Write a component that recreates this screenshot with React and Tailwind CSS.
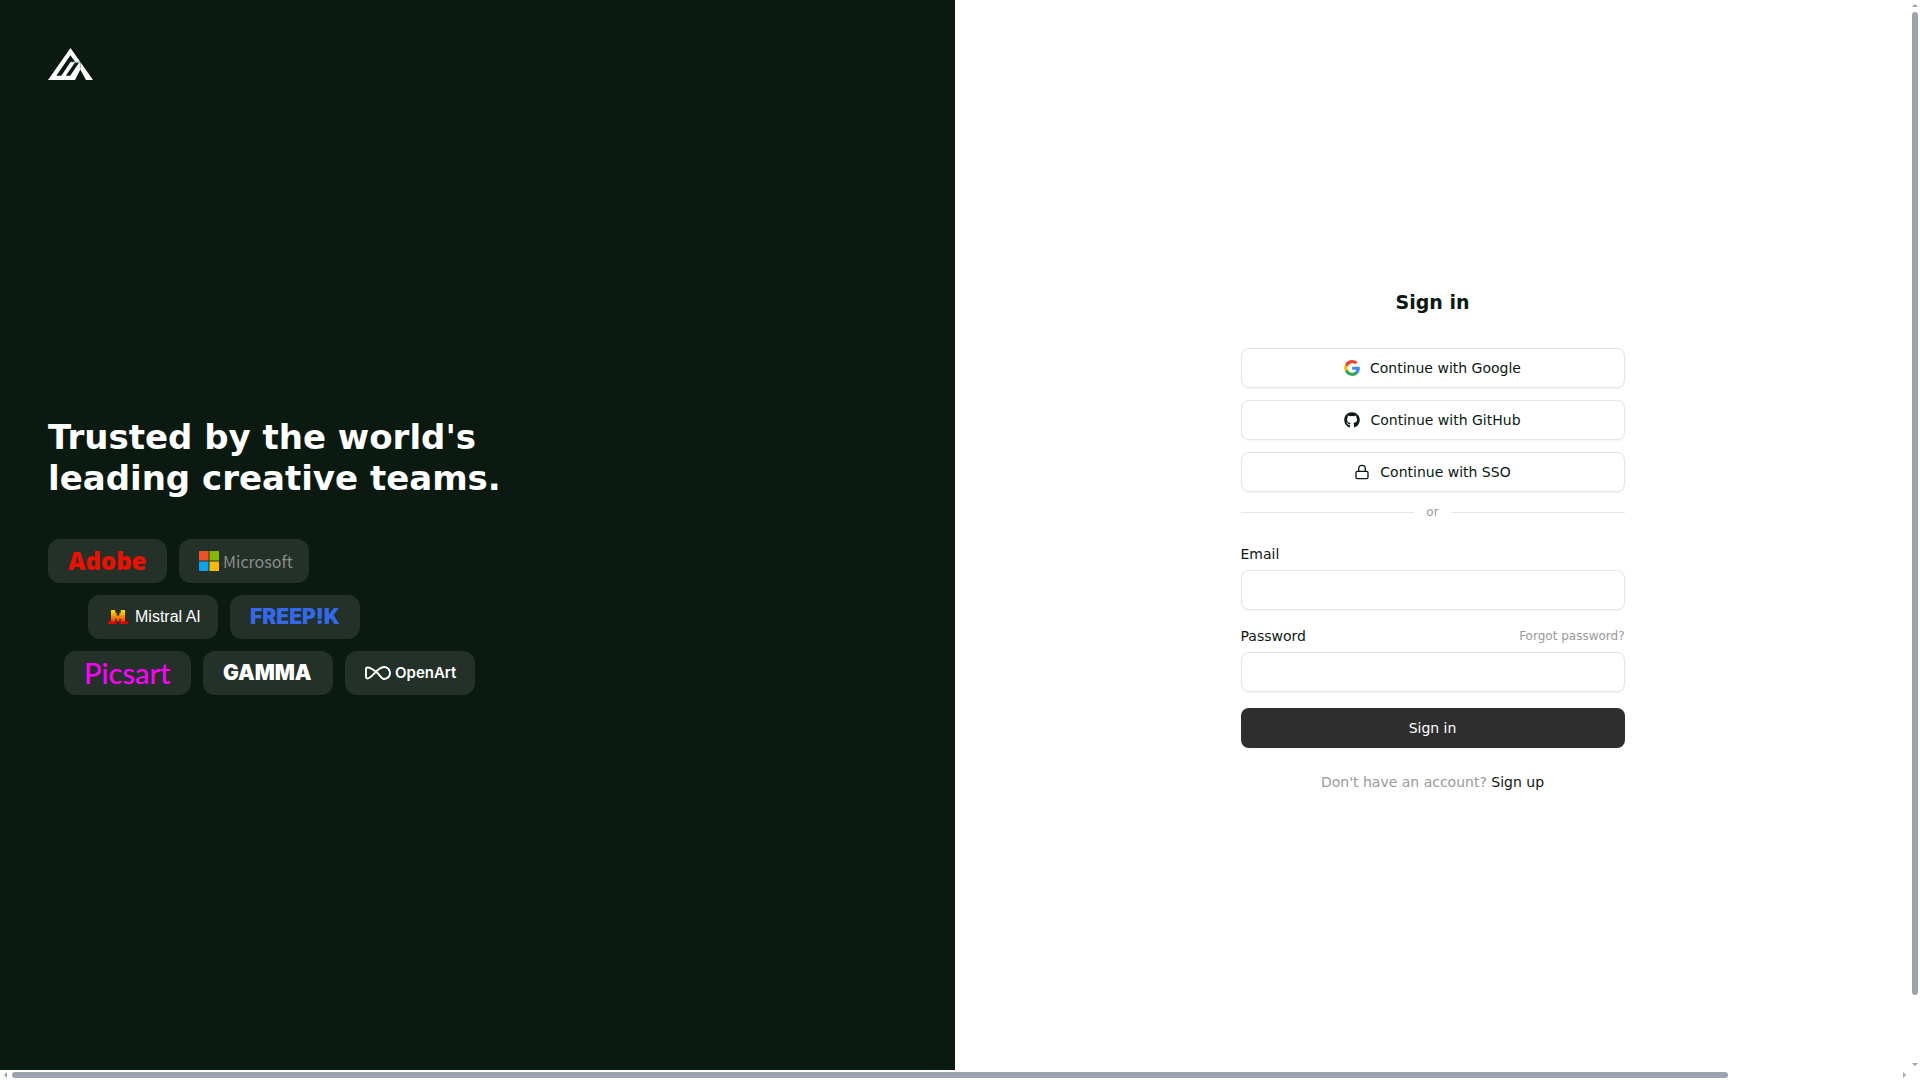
import { FaGithub } from 'react-icons/fa';
import { Lock } from 'lucide-react';

function BrandMark() {
    return (
        <svg className="h-8 w-[45px] shrink-0" viewBox="0 0 45 32" role="img" aria-label="Home">
            <path fill="#fff" d="M22.5 0 45 32H38L32.3 21.5 27 32H0Z" />
            <path fill="#0a1a10" d="M22.4 7.3 27 13.7H22.7L13.3 27.7H8.3Z" />
            <path fill="#0a1a10" d="M26.8 14.7H31L22.2 27.7H17.8Z" />
            <path fill="none" stroke="#0a1a10" strokeOpacity=".6" strokeWidth=".7" d="M23 14H32.3V20.5" />
        </svg>
    );
}

function GoogleIcon() {
    return (
        <svg className="size-4" viewBox="0 0 24 24" aria-hidden="true">
            <path fill="#4285F4" d="M23.745 12.27c0-.79-.07-1.54-.19-2.27h-11.3v4.51h6.47c-.29 1.48-1.14 2.73-2.4 3.58v3h3.86c2.26-2.09 3.56-5.17 3.56-8.82Z" />
            <path fill="#34A853" d="M12.255 24c3.24 0 5.95-1.08 7.93-2.91l-3.86-3c-1.08.72-2.45 1.16-4.07 1.16-3.13 0-5.78-2.11-6.73-4.96h-3.98v3.09C3.515 21.3 7.565 24 12.255 24Z" />
            <path fill="#FBBC05" d="M5.525 14.29c-.25-.72-.38-1.49-.38-2.29s.14-1.57.38-2.29V6.62h-3.98a11.86 11.86 0 0 0 0 10.76l3.98-3.09Z" />
            <path fill="#EA4335" d="M12.255 4.75c1.77 0 3.35.61 4.6 1.8l3.42-3.42C18.205 1.19 15.495 0 12.255 0c-4.69 0-8.74 2.7-10.71 6.62l3.98 3.09c.95-2.85 3.6-4.96 6.73-4.96Z" />
        </svg>
    );
}

function MicrosoftTiles() {
    return (
        <svg className="size-5 shrink-0" viewBox="0 0 20 20" aria-hidden="true">
            <path fill="#f25022" d="M0 0h9.5v9.5H0z" />
            <path fill="#7fba00" d="M10.5 0H20v9.5h-9.5z" />
            <path fill="#00a4ef" d="M0 10.5h9.5V20H0z" />
            <path fill="#ffb900" d="M10.5 10.5H20V20h-9.5z" />
        </svg>
    );
}

function MistralTiles() {
    return (
        <svg className="h-[14px] w-5 shrink-0" viewBox="0 0 14 10" aria-hidden="true">
            <path fill="#ffd800" d="M2 0h3v3H2zM9 0h3v3H9z" />
            <path fill="#ffaf00" d="M2 2h4v3H2zM8 2h4v3H8z" />
            <path fill="#ff8205" d="M2 4h10v2H2zM2 5h3v2H2zM6 5h2v2H6zM9 5h3v2H9z" />
            <path fill="#fa500f" d="M2 6h3v3H2zM6 6h2v2H6zM9 6h3v3H9z" />
            <path fill="#e10500" d="M0 8h6v2H0zM8 8h6v2H8z" />
        </svg>
    );
}

function OpenArtLoop() {
    return (
        <svg className="h-[14px] w-[26px] shrink-0" viewBox="0 0 26 14" fill="none" stroke="white" strokeWidth="1.9" aria-hidden="true">
            <path d="M12.5 7C9.5 4.5 5.5 1.5 2.5 1.5Q1 1.5 1 3V11Q1 12.5 2.5 12.5C7.5 12.5 12 1 19 1A6 6 0 0 1 19 13C16.5 13 14.5 9 12.5 7Z" />
        </svg>
    );
}

function LogoCard({ children }) {
    return <div className="flex h-11 items-center rounded-xl bg-white/10 px-5">{children}</div>;
}

function SocialButton({ icon, children }) {
    return (
        <button type="button" className="flex h-10 w-full items-center justify-center gap-2.5 rounded-lg border border-[#e5e5e5] bg-white text-sm shadow-xs">
            {icon}
            {children}
        </button>
    );
}

function Arrow({ d }) {
    return (
        <svg className="size-[6px]" viewBox="0 0 6 6" fill="#9ca3af">
            <path d={d} />
        </svg>
    );
}

const inputClass = 'mt-1.5 block h-10 w-full rounded-lg border border-[#e5e5e5] bg-white px-3 text-sm shadow-xs outline-none';

export default function App() {
    return (
        <div className="grid h-screen grid-cols-[1fr_10px] grid-rows-[1fr_10px] bg-white font-['DejaVu_Sans',sans-serif] text-[#0a1a10]">
            <div className="grid min-h-0 grid-cols-2 overflow-hidden">
                <section className="flex h-screen flex-col bg-[#0a1a10] p-12 text-white">
                    <BrandMark />
                    <div className="flex flex-1 flex-col justify-center">
                        <h2 className="text-[34px] leading-[41px] font-bold">
                            Trusted by the world's
                            <br />
                            leading creative teams.
                        </h2>
                        <div className="mt-10 flex flex-col gap-3">
                            <div className="flex gap-3">
                                <LogoCard>
                                    <span className="w-[79px] font-['Noto_Sans',sans-serif] text-2xl leading-5 font-black text-[#eb1000]">Adobe</span>
                                </LogoCard>
                                <LogoCard>
                                    <div className="flex w-[90px] items-center gap-1">
                                        <MicrosoftTiles />
                                        <span className="font-['Noto_Sans_CJK_SC',sans-serif] text-base leading-5 text-[#8c8c8c]">Microsoft</span>
                                    </div>
                                </LogoCard>
                            </div>
                            <div className="flex gap-3 pl-10">
                                <LogoCard>
                                    <div className="flex w-[90px] items-center gap-[7px]">
                                        <MistralTiles />
                                        <span className="font-['Liberation_Sans',sans-serif] text-base leading-5 whitespace-nowrap">Mistral AI</span>
                                    </div>
                                </LogoCard>
                                <LogoCard>
                                    <span className="w-[90px] font-['Inter',sans-serif] text-[21px] leading-5 font-black text-[#336aea]">FREEP!K</span>
                                </LogoCard>
                            </div>
                            <div className="flex gap-3 pl-4">
                                <LogoCard>
                                    <span className="w-[87px] font-['Lato',sans-serif] text-[29px] leading-5 font-medium text-[#ff00ff]">Picsart</span>
                                </LogoCard>
                                <LogoCard>
                                    <span className="w-[90px] font-['Inter',sans-serif] text-[21px] leading-5 font-black">GAMMA</span>
                                </LogoCard>
                                <LogoCard>
                                    <div className="flex w-[90px] items-center gap-1">
                                        <OpenArtLoop />
                                        <span className="font-['Inter',sans-serif] text-[15px] leading-5 font-semibold">OpenArt</span>
                                    </div>
                                </LogoCard>
                            </div>
                        </div>
                    </div>
                </section>

                <main className="flex h-screen items-center justify-center px-6">
                    <form className="w-full max-w-96" onSubmit={(e) => e.preventDefault()}>
                        <h1 className="mb-8 text-center text-[19px] leading-7 font-bold">Sign in</h1>
                        <div className="space-y-3">
                            <SocialButton icon={<GoogleIcon />}>Continue with Google</SocialButton>
                            <SocialButton icon={<FaGithub className="size-4" />}>Continue with GitHub</SocialButton>
                            <SocialButton icon={<Lock className="size-4" strokeWidth={2} />}>Continue with SSO</SocialButton>
                        </div>
                        <div className="mt-3 mb-6 flex items-center gap-3 text-xs text-[#9a9a9a]">
                            <span className="h-px flex-1 bg-[#e5e5e5]" />
                            or
                            <span className="h-px flex-1 bg-[#e5e5e5]" />
                        </div>
                        <label htmlFor="email" className="block text-sm">Email</label>
                        <input id="email" type="email" className={inputClass} />
                        <div className="mt-4 flex items-center justify-between">
                            <label htmlFor="password" className="text-sm">Password</label>
                            <a href="#forgot" className="text-xs text-[#9a9a9a]">Forgot password?</a>
                        </div>
                        <input id="password" type="password" className={inputClass} />
                        <button type="submit" className="mt-4 h-10 w-full rounded-lg bg-[#2e2e2e] text-sm text-white shadow-xs">
                            Sign in
                        </button>
                        <p className="mt-6 text-center text-sm text-[#9a9a9a]">
                            Don't have an account? <a href="#signup" className="text-[#0a1a10]">Sign up</a>
                        </p>
                    </form>
                </main>
            </div>

            {/* vertical scrollbar */}
            <div className="flex min-h-0 flex-col items-center justify-between py-[3px]" aria-hidden="true">
                <Arrow d="M0 4 3 1 6 4Z" />
                <div className="my-[3px] w-full flex-1 px-[2px]">
                    <div className="h-[94%] w-full rounded-full bg-[#9ca3af]" />
                </div>
                <Arrow d="M0 2 3 5 6 2Z" />
            </div>

            {/* horizontal scrollbar */}
            <div className="flex items-center justify-between px-[3px]" aria-hidden="true">
                <Arrow d="M4 0 1 3 4 6Z" />
                <div className="mx-[3px] flex-1">
                    <div className="h-[6px] w-[91%] rounded-full bg-[#9ca3af]" />
                </div>
                <Arrow d="M2 0 5 3 2 6Z" />
            </div>
        </div>
    );
}
